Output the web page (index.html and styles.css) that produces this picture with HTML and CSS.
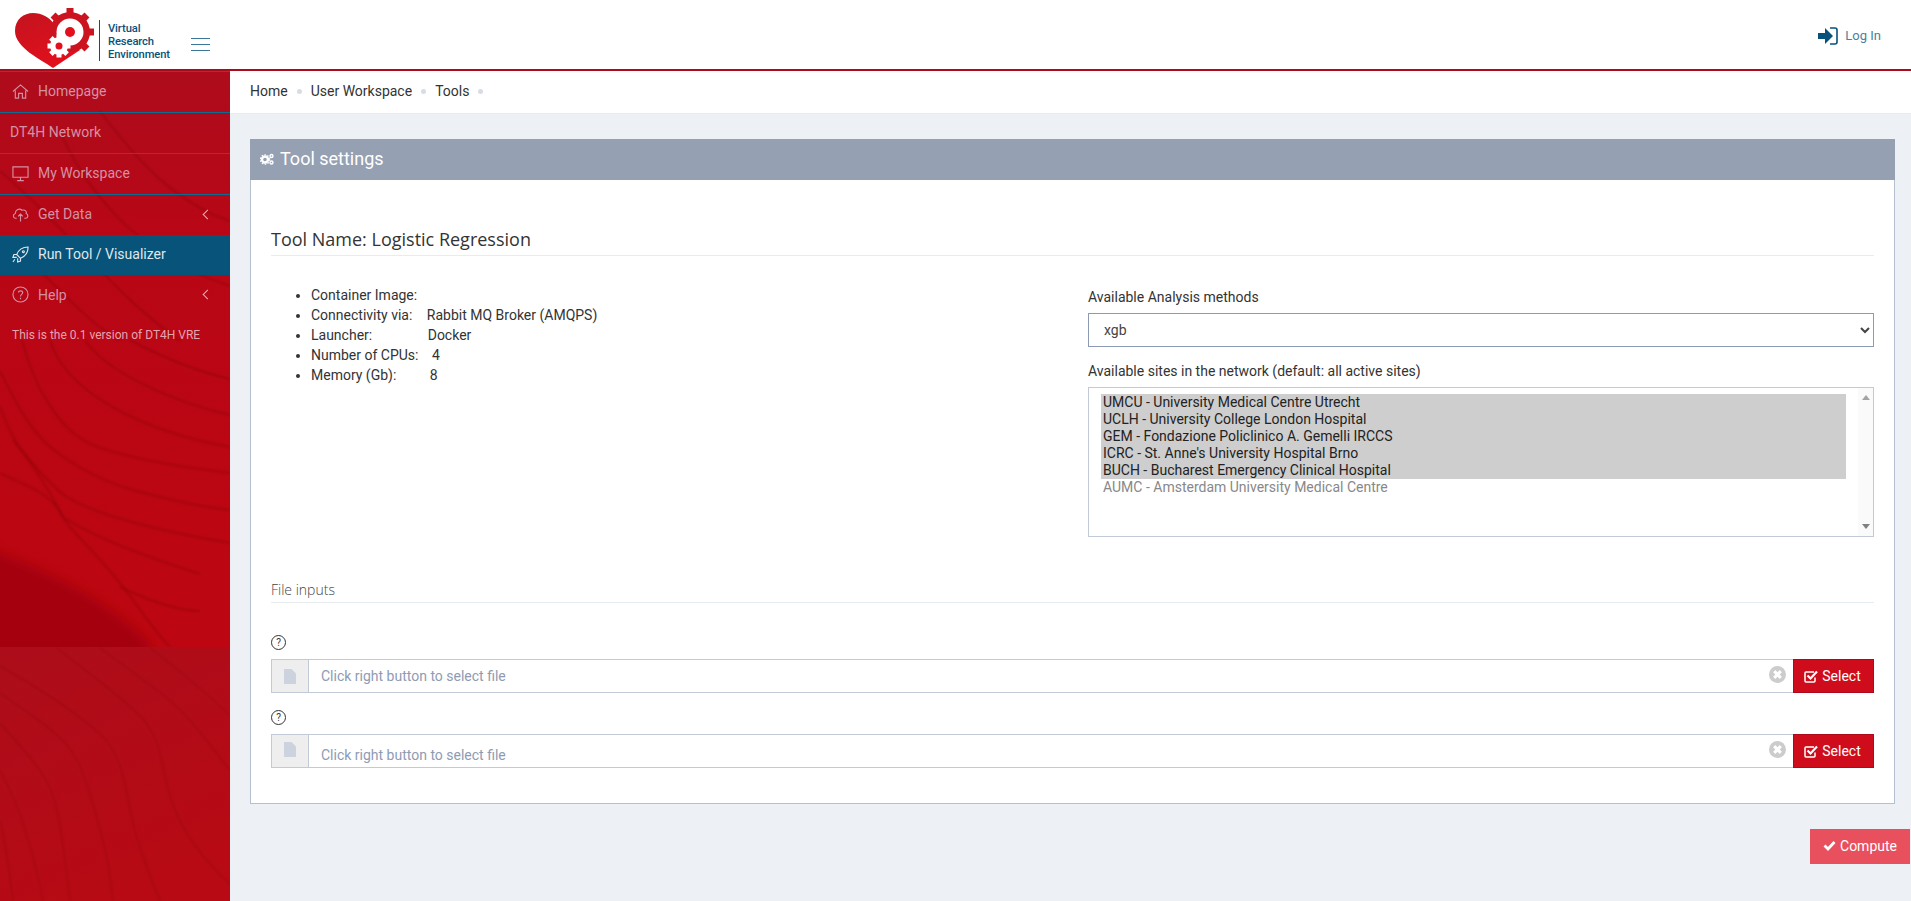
FILE: index.html
```html
<!DOCTYPE html>
<html lang="en">
<head>
  <meta charset="UTF-8">
  <title>Virtual Research Environment</title>
  <link rel="stylesheet" href="styles.css">
</head>
<body>
  <header class="topbar">
    <div class="logo">
      <svg class="logo-heart" width="99" height="69" viewBox="0 0 99 69">
        <defs>
          <linearGradient id="heartFill" x1="0" y1="0" x2="0.6" y2="1">
            <stop offset="0" stop-color="#c2141f"/>
            <stop offset="1" stop-color="#e30f1c"/>
          </linearGradient>
        </defs>
        <path d="M53 68 C42 60 15 48 15 31 C15 19 24 13 33 13 C42 13 49 17 54 24 L80 50 Q65 60 53 68 Z" fill="url(#heartFill)"/>
        <circle cx="70" cy="32" r="20" fill="#cb1420"/>
        <g fill="#cb1420">
          <rect x="66.500" y="8" width="7" height="7"/>
          <rect x="66.500" y="8" width="7" height="7" transform="rotate(45 70 32)"/>
          <rect x="66.500" y="8" width="7" height="7" transform="rotate(90 70 32)"/>
          <rect x="66.500" y="8" width="7" height="7" transform="rotate(135 70 32)"/>
          <rect x="66.500" y="8" width="7" height="7" transform="rotate(-45 70 32)"/>
        </g>
        <circle cx="70" cy="32" r="13.500" fill="#fff"/>
        <circle cx="70" cy="32" r="5" fill="#e30f1c"/>
        <g fill="#fff">
          <circle cx="59" cy="46" r="9"/>
          <rect x="56.500" y="34.500" width="5" height="23"/>
          <rect x="47.500" y="43.500" width="23" height="5"/>
          <rect x="56.500" y="34.500" width="5" height="23" transform="rotate(45 59 46)"/>
          <rect x="56.500" y="34.500" width="5" height="23" transform="rotate(-45 59 46)"/>
        </g>
        <circle cx="59" cy="46" r="3.500" fill="#e30f1c"/>
      </svg>
      <span class="logo-text">Virtual<br>Research<br>Environment</span>
    </div>
    <button class="burger" aria-label="Toggle menu"><span></span><span></span><span></span></button>
    <a class="login" href="#">
      <svg width="20" height="18" viewBox="0 0 20 18">
        <path d="M0 6 H7 V1 L15 9 L7 17 V12 H0 Z" fill="#06527a"/>
        <path d="M12 1 H17 Q19 1 19 3 V15 Q19 17 17 17 H12" fill="none" stroke="#06527a" stroke-width="1.600"/>
      </svg>
      <span>Log In</span>
    </a>
  </header>

  <div class="layout">
    <aside class="sidebar">
      <svg class="sidebar-bg" width="230" height="830" viewBox="0 0 230 830">
        <defs>
          <linearGradient id="sideTop" x1="0" y1="0" x2="0" y2="1">
            <stop offset="0" stop-color="#ae0c1c"/>
            <stop offset="0.3" stop-color="#b90616"/>
            <stop offset="1" stop-color="#bd0611"/>
          </linearGradient>
          <linearGradient id="sideBottom" x1="0" y1="0" x2="0.4" y2="1">
            <stop offset="0" stop-color="#ac0d1a"/>
            <stop offset="1" stop-color="#b70a15"/>
          </linearGradient>
          <filter id="soft"><feGaussianBlur stdDeviation="0.8"/></filter>
          <filter id="softer"><feGaussianBlur stdDeviation="6"/></filter>
        </defs>
        <rect width="230" height="576" fill="url(#sideTop)"/>
        <path d="M-30 470 C50 500 100 525 150 572 L150 600 L-30 600 Z" fill="#a40510" filter="url(#softer)"/>
        <g fill="none" stroke="#84040e" stroke-opacity="0.4" stroke-width="2" filter="url(#soft)">
          <path d="M100 40 C130 80 170 130 230 150"/>
          <path d="M60 60 C90 130 150 190 230 215"/>
          <path d="M0 100 C60 150 110 220 180 270"/>
          <path d="M30 190 C70 230 100 260 120 269"/>
          <path d="M130 269 C160 285 195 300 230 308"/>
          <path d="M85 269 C105 300 170 330 230 344"/>
          <path d="M50 269 C65 320 140 360 230 376"/>
          <path d="M22 269 C35 320 60 355 83 369 S170 395 230 402"/>
          <path d="M0 300 C15 330 25 350 43 369 S100 410 133 419 S200 436 230 439"/>
          <path d="M0 335 C5 350 10 360 15 369 S50 415 67 426 S130 455 230 472"/>
          <path d="M13 369 C35 395 55 430 63 446 S100 483 133 529 S165 570 170 576"/>
          <path d="M63 446 C100 470 160 490 200 503"/>
          <path d="M0 402 C25 415 50 420 63 446"/>
          <path d="M120 516 C150 530 180 540 200 540"/>
        </g>
        <rect y="576" width="230" height="254" fill="url(#sideBottom)"/>
        <g fill="none" stroke="#84040e" stroke-opacity="0.3" stroke-width="1.500" filter="url(#soft)">
          <path d="M0 652 C20 675 40 695 50 717 S65 790 70 830"/>
          <path d="M0 622 C25 640 50 655 67 674 S95 740 103 770 S110 810 113 830"/>
          <path d="M0 595 C35 615 75 640 100 663 S125 720 133 752 S150 805 160 830"/>
          <path d="M57 577 C85 600 115 620 140 645 S160 700 173 734 S210 795 230 813"/>
          <path d="M100 577 C125 595 145 610 167 627 S210 675 230 699"/>
          <path d="M0 699 C10 720 18 735 23 752 S38 800 43 830"/>
          <path d="M0 749 C6 775 10 805 13 830"/>
          <path d="M150 577 C180 600 205 620 230 645"/>
        </g>
      </svg>
      <nav class="side-nav">
        <a class="nav-item" href="#">
          <svg class="nav-icon" viewBox="0 0 18 18"><path d="M1 9 L9 2 L17 9 M3.500 8 V16 H7 V11 H11 V16 H14.500 V8"/></svg>
          Homepage
        </a>
        <a class="nav-item nav-plain" href="#">DT4H Network</a>
        <a class="nav-item" href="#">
          <svg class="nav-icon" viewBox="0 0 18 18"><path d="M1 2 H17 V13 H1 Z M9 13 V16 M5.500 16.500 H12.500"/></svg>
          My Workspace
        </a>
        <a class="nav-item" href="#">
          <svg class="nav-icon" viewBox="0 0 18 18"><path d="M5 13 H4 C1 13 0.500 9 3.500 8 C3.500 4 8 2 10.500 4.500 C14 3.500 16 6 15 8 C17.500 9 17.500 13 14 13 H13 M9 16.500 V8.500 M6.500 11 L9 8.500 L11.500 11"/></svg>
          Get Data
          <span class="chevron"></span>
        </a>
        <a class="nav-item nav-active" href="#">
          <svg class="nav-icon" viewBox="0 0 18 18"><path d="M17 1 C11 1 7 4 5 9 L9 13 C14 11 17 7 17 1 Z M5 9 H2 L1 12 H5 M9 13 V16 L6 17 V13 M3 14 L1 17 M12 5 A1 1 0 1 0 12.100 5"/></svg>
          Run Tool / Visualizer
        </a>
        <a class="nav-item" href="#">
          <svg class="nav-icon" viewBox="0 0 18 18"><circle cx="9" cy="9" r="8"/><path d="M6.800 7 C6.800 4.500 11.300 4.500 11.300 7 C11.300 9 9 8.800 9 11 M9 12.500 V14"/></svg>
          Help
          <span class="chevron"></span>
        </a>
      </nav>
      <p class="version">This is the 0.1 version of DT4H VRE</p>
    </aside>

    <main class="content">
      <div class="breadcrumb">
        <a href="#">Home</a><i></i><a href="#">User Workspace</a><i></i><a href="#">Tools</a><i></i>
      </div>

      <div class="page">
        <section class="panel">
          <h2 class="panel-title">
            <svg width="14" height="12" viewBox="0 0 14 12">
              <circle cx="5" cy="6.500" r="3" fill="none" stroke="#fff" stroke-width="2.400"/>
              <circle cx="5" cy="6.500" r="4.700" fill="none" stroke="#fff" stroke-width="1.200" stroke-dasharray="1.500 1.500"/>
              <circle cx="11.500" cy="3" r="1.500" fill="none" stroke="#fff" stroke-width="1.400"/>
              <circle cx="11.500" cy="9.500" r="1.500" fill="none" stroke="#fff" stroke-width="1.400"/>
            </svg>
            Tool settings
          </h2>
          <div class="panel-body">
            <h3 class="tool-name">Tool Name: Logistic Regression</h3>

            <div class="columns">
              <ul class="specs">
                <li>Container Image:</li>
                <li>Connectivity via: <span class="gap-a">Rabbit MQ Broker (AMQPS)</span></li>
                <li>Launcher: <span class="gap-b">Docker</span></li>
                <li>Number of CPUs: <span class="gap-c">4</span></li>
                <li>Memory (Gb): <span class="gap-d">8</span></li>
              </ul>
              <div class="options">
                <label class="field-label">Available Analysis methods</label>
                <select class="method">
                  <option>xgb</option>
                </select>
                <label class="field-label">Available sites in the network (default: all active sites)</label>
                <div class="sites">
                  <div class="sites-list">
                    <div class="site selected">UMCU - University Medical Centre Utrecht</div>
                    <div class="site selected">UCLH - University College London Hospital</div>
                    <div class="site selected">GEM - Fondazione Policlinico A. Gemelli IRCCS</div>
                    <div class="site selected">ICRC - St. Anne's University Hospital Brno</div>
                    <div class="site selected">BUCH - Bucharest Emergency Clinical Hospital</div>
                    <div class="site">AUMC - Amsterdam University Medical Centre</div>
                  </div>
                  <div class="sites-scroll"><span class="arrow-up"></span><span class="arrow-down"></span></div>
                </div>
              </div>
            </div>

            <h4 class="section-title">File inputs</h4>

            <div class="file-field">
              <span class="help-mark">?</span>
              <div class="file-row">
                <span class="file-addon">
                  <svg width="12" height="15" viewBox="0 0 12 15"><path d="M0 0 H7.500 L12 4.500 V15 H0 Z" fill="#ccd3de"/></svg>
                </span>
                <span class="file-text">Click right button to select file</span>
                <span class="clear-x">
                  <svg width="11" height="11" viewBox="0 0 10 10"><path d="M2 2 L8 8 M8 2 L2 8" stroke="#fff" stroke-width="2.800"/></svg>
                </span>
                <button class="select-btn">
                  <svg width="15" height="13" viewBox="0 0 15 13"><path d="M11 7.500 V11 Q11 12 10 12 H2 Q1 12 1 11 V3 Q1 2 2 2 H10" fill="none" stroke="#fff" stroke-width="1.500"/><path d="M3.500 5.500 L6.500 8.500 L13 1.500" fill="none" stroke="#fff" stroke-width="2.200"/></svg>
                  Select
                </button>
              </div>
            </div>

            <div class="file-field">
              <span class="help-mark">?</span>
              <div class="file-row">
                <span class="file-addon file-addon-high">
                  <svg width="12" height="15" viewBox="0 0 12 15"><path d="M0 0 H7.500 L12 4.500 V15 H0 Z" fill="#ccd3de"/></svg>
                </span>
                <span class="file-text file-text-low">Click right button to select file</span>
                <span class="clear-x">
                  <svg width="11" height="11" viewBox="0 0 10 10"><path d="M2 2 L8 8 M8 2 L2 8" stroke="#fff" stroke-width="2.800"/></svg>
                </span>
                <button class="select-btn">
                  <svg width="15" height="13" viewBox="0 0 15 13"><path d="M11 7.500 V11 Q11 12 10 12 H2 Q1 12 1 11 V3 Q1 2 2 2 H10" fill="none" stroke="#fff" stroke-width="1.500"/><path d="M3.500 5.500 L6.500 8.500 L13 1.500" fill="none" stroke="#fff" stroke-width="2.200"/></svg>
                  Select
                </button>
              </div>
            </div>
          </div>
        </section>

        <div class="actions">
          <button class="compute">
            <svg width="13" height="11" viewBox="0 0 13 11"><path d="M1.500 5.500 L5 9 L11.500 2" fill="none" stroke="#fff" stroke-width="2.800"/></svg>
            Compute
          </button>
        </div>
      </div>
    </main>
  </div>
</body>
</html>
```

FILE: styles.css
```css
* {
  box-sizing: border-box;
}
html, body {
  height: 100%;
}
body {
  margin: 0;
  font-family: Roboto, sans-serif;
  font-size: 14px;
  color: #333;
  background-color: #edf0f5;
  overflow: hidden;
}
a {
  text-decoration: none;
  color: inherit;
}

/* top bar */
.topbar {
  height: 71px;
  background: #fff;
  border-bottom: 2px solid #ad0a1c;
  display: flex;
  align-items: center;
}
.logo {
  width: 174px;
  height: 69px;
  display: flex;
  align-items: center;
  flex-shrink: 0;
}
.logo-heart {
  flex-shrink: 0;
}
.logo-text {
  font-family: Roboto, sans-serif;
  font-size: 11.200px;
  font-weight: 500;
  letter-spacing: -0.1px;
  line-height: 13px;
  color: #06527a;
  border-left: 1px solid #06527a;
  padding: 2px 0 0 8px;
  margin-top: 11px;
  white-space: nowrap;
}
.burger {
  width: 19px;
  height: 13px;
  margin: 20px 0 0 17px;
  padding: 0;
  border: none;
  background: none;
  display: flex;
  flex-direction: column;
  justify-content: space-between;
}
.burger span {
  display: block;
  height: 1px;
  background: #3d7796;
}
.login {
  margin-left: auto;
  margin-right: 30px;
  margin-top: 2px;
  display: flex;
  align-items: center;
  gap: 7px;
  font-size: 13px;
  color: #4a7fa0;
}

/* side bar */
.layout {
  display: flex;
  height: calc(100vh - 71px);
}
.sidebar {
  width: 230px;
  flex-shrink: 0;
  position: relative;
  overflow: hidden;
}
.sidebar-bg {
  position: absolute;
  top: 0;
  left: 0;
}
.side-nav {
  position: relative;
  display: flex;
  flex-direction: column;
  border-top: 1px solid #0b6d93;
}
.nav-item {
  height: 41px;
  padding: 0 0 2px 12px;
  display: flex;
  align-items: center;
  font-size: 14px;
  color: #d491a4;
  border-bottom: 1px solid #0b6d93;
}
.nav-item:nth-child(4), .nav-item:nth-child(5) {
  border-bottom: none;
  height: 40px;
}
.nav-item:last-child {
  border-bottom: none;
}
.nav-plain {
  padding-left: 10px;
}
.nav-active {
  background: #07537a;
  color: #dfe7ec;
}
.nav-icon {
  width: 17px;
  height: 17px;
  margin-right: 9px;
  fill: none;
  stroke: currentColor;
  stroke-width: 1.200;
  flex-shrink: 0;
}
.chevron {
  width: 7px;
  height: 7px;
  margin-left: auto;
  margin-right: 19px;
  border-left: 1.500px solid #e8b2ba;
  border-bottom: 1.500px solid #e8b2ba;
  transform: rotate(45deg);
}
.version {
  position: relative;
  margin: 12px 0 0 12px;
  font-size: 12px;
  color: #e3a5ae;
}

/* content */
.content {
  flex: 1;
  min-width: 0;
  display: flex;
  flex-direction: column;
}
.breadcrumb {
  height: 43px;
  padding: 0 0 2px 20px;
  background: #fff;
  border-bottom: 1px solid #e7ecf1;
  display: flex;
  align-items: center;
  font-size: 14px;
  color: #333;
}
.breadcrumb i {
  width: 5px;
  height: 5px;
  border-radius: 50%;
  background: #d8dde3;
  margin: 0 9px;
}
.page {
  padding: 25px 16px 0 20px;
}
.panel {
  background: #fff;
  border: 1px solid #b5c0cf;
  border-top: none;
  height: 665px;
}
.panel-title {
  margin: 0 -1px;
  height: 41px;
  padding: 0 0 2px 10px;
  background: #95a0b2;
  color: #fff;
  font-size: 18px;
  font-weight: 400;
  display: flex;
  align-items: center;
  gap: 6px;
}
.panel-body {
  padding: 47px 20px 0 20px;
}
.tool-name {
  margin: 0;
  font-family: "Open Sans", sans-serif;
  font-size: 18px;
  font-weight: 400;
  line-height: 24px;
  padding-bottom: 4px;
  color: #333;
  border-bottom: 1px solid #e7ecf1;
}
.columns {
  display: flex;
  margin-top: 24px;
}
.specs {
  flex: 0 0 817px;
  margin: 5px 0 0;
  padding-left: 40px;
  line-height: 20px;
  list-style: disc;
}
.gap-a { margin-left: 11px; }
.gap-b { margin-left: 52px; }
.gap-c { margin-left: 10px; }
.gap-d { margin-left: 30px; }
.options {
  flex: 1;
  min-width: 0;
  padding-top: 7px;
}
.field-label {
  display: block;
  line-height: 20px;
  margin-bottom: 6px;
}
.method {
  display: block;
  width: 100%;
  height: 34px;
  padding: 0 11px;
  margin-bottom: 14px;
  font-family: Roboto, sans-serif;
  font-size: 14px;
  color: #444;
  background: #fff;
  border: 1px solid #8c9ab5;
  border-radius: 0;
}
.sites {
  height: 150px;
  border: 1px solid #c2cad8;
  display: flex;
  padding: 6px 0 0 12px;
}
.sites-list {
  width: 1px;
  flex: 1;
}
.site {
  height: 17px;
  line-height: 17px;
  padding-left: 2px;
  color: #888;
}
.site.selected {
  background: #cecece;
  color: #222;
}
.sites-scroll {
  width: 15px;
  margin: -6px 0 0 12px;
  flex-shrink: 0;
  background: #fafafa;
  display: flex;
  flex-direction: column;
  justify-content: space-between;
  align-items: center;
  padding: 7px 0;
}
.arrow-up {
  border-left: 4px solid transparent;
  border-right: 4px solid transparent;
  border-bottom: 5px solid #a3a3a3;
}
.arrow-down {
  border-left: 4px solid transparent;
  border-right: 4px solid transparent;
  border-top: 5px solid #808080;
}
.section-title {
  margin: 43px 0 0;
  padding-bottom: 3px;
  font-family: "Open Sans", sans-serif;
  font-size: 14px;
  font-weight: 300;
  line-height: 19px;
  color: #444;
  border-bottom: 1px solid #e7ecf1;
}
.file-field {
  margin-top: 32px;
}
.file-field + .file-field {
  margin-top: 17px;
}
.help-mark {
  display: block;
  width: 15px;
  height: 15px;
  border: 1px solid #333;
  border-radius: 50%;
  font-size: 10px;
  line-height: 13px;
  text-align: center;
  margin-bottom: 9px;
}
.file-row {
  display: flex;
  height: 34px;
  align-items: stretch;
  position: relative;
}
.file-addon {
  width: 38px;
  flex-shrink: 0;
  background: #eee;
  border: 1px solid #c2cad8;
  display: flex;
  align-items: center;
  justify-content: center;
}
.file-addon-high {
  padding-bottom: 4px;
}
.file-text {
  flex: 1;
  min-width: 0;
  padding-left: 12px;
  line-height: 32px;
  color: #8e9bb3;
  border: 1px solid #c2cad8;
  border-left: none;
  border-right: none;
}
.file-text-low {
  line-height: 40px;
}
.clear-x {
  position: absolute;
  right: 88px;
  top: 7px;
  width: 17px;
  height: 17px;
  border-radius: 50%;
  background: #cccccc;
  display: flex;
  align-items: center;
  justify-content: center;
}
.select-btn {
  width: 81px;
  flex-shrink: 0;
  border: 1px solid #ad0a1c;
  background: #cf0c1b;
  color: #fff;
  font-family: Roboto, sans-serif;
  font-size: 14px;
  display: flex;
  align-items: center;
  justify-content: center;
  gap: 3px;
  padding: 0 2px 0 0;
}
.actions {
  display: flex;
  justify-content: flex-end;
  margin: 25px -15px 0 0;
}
.compute {
  width: 100px;
  height: 35px;
  border: none;
  background: #e8505e;
  color: #fff;
  font-family: Roboto, sans-serif;
  font-size: 14px;
  display: flex;
  align-items: center;
  justify-content: center;
  gap: 4px;
  padding: 0 0 2px;
}
```
